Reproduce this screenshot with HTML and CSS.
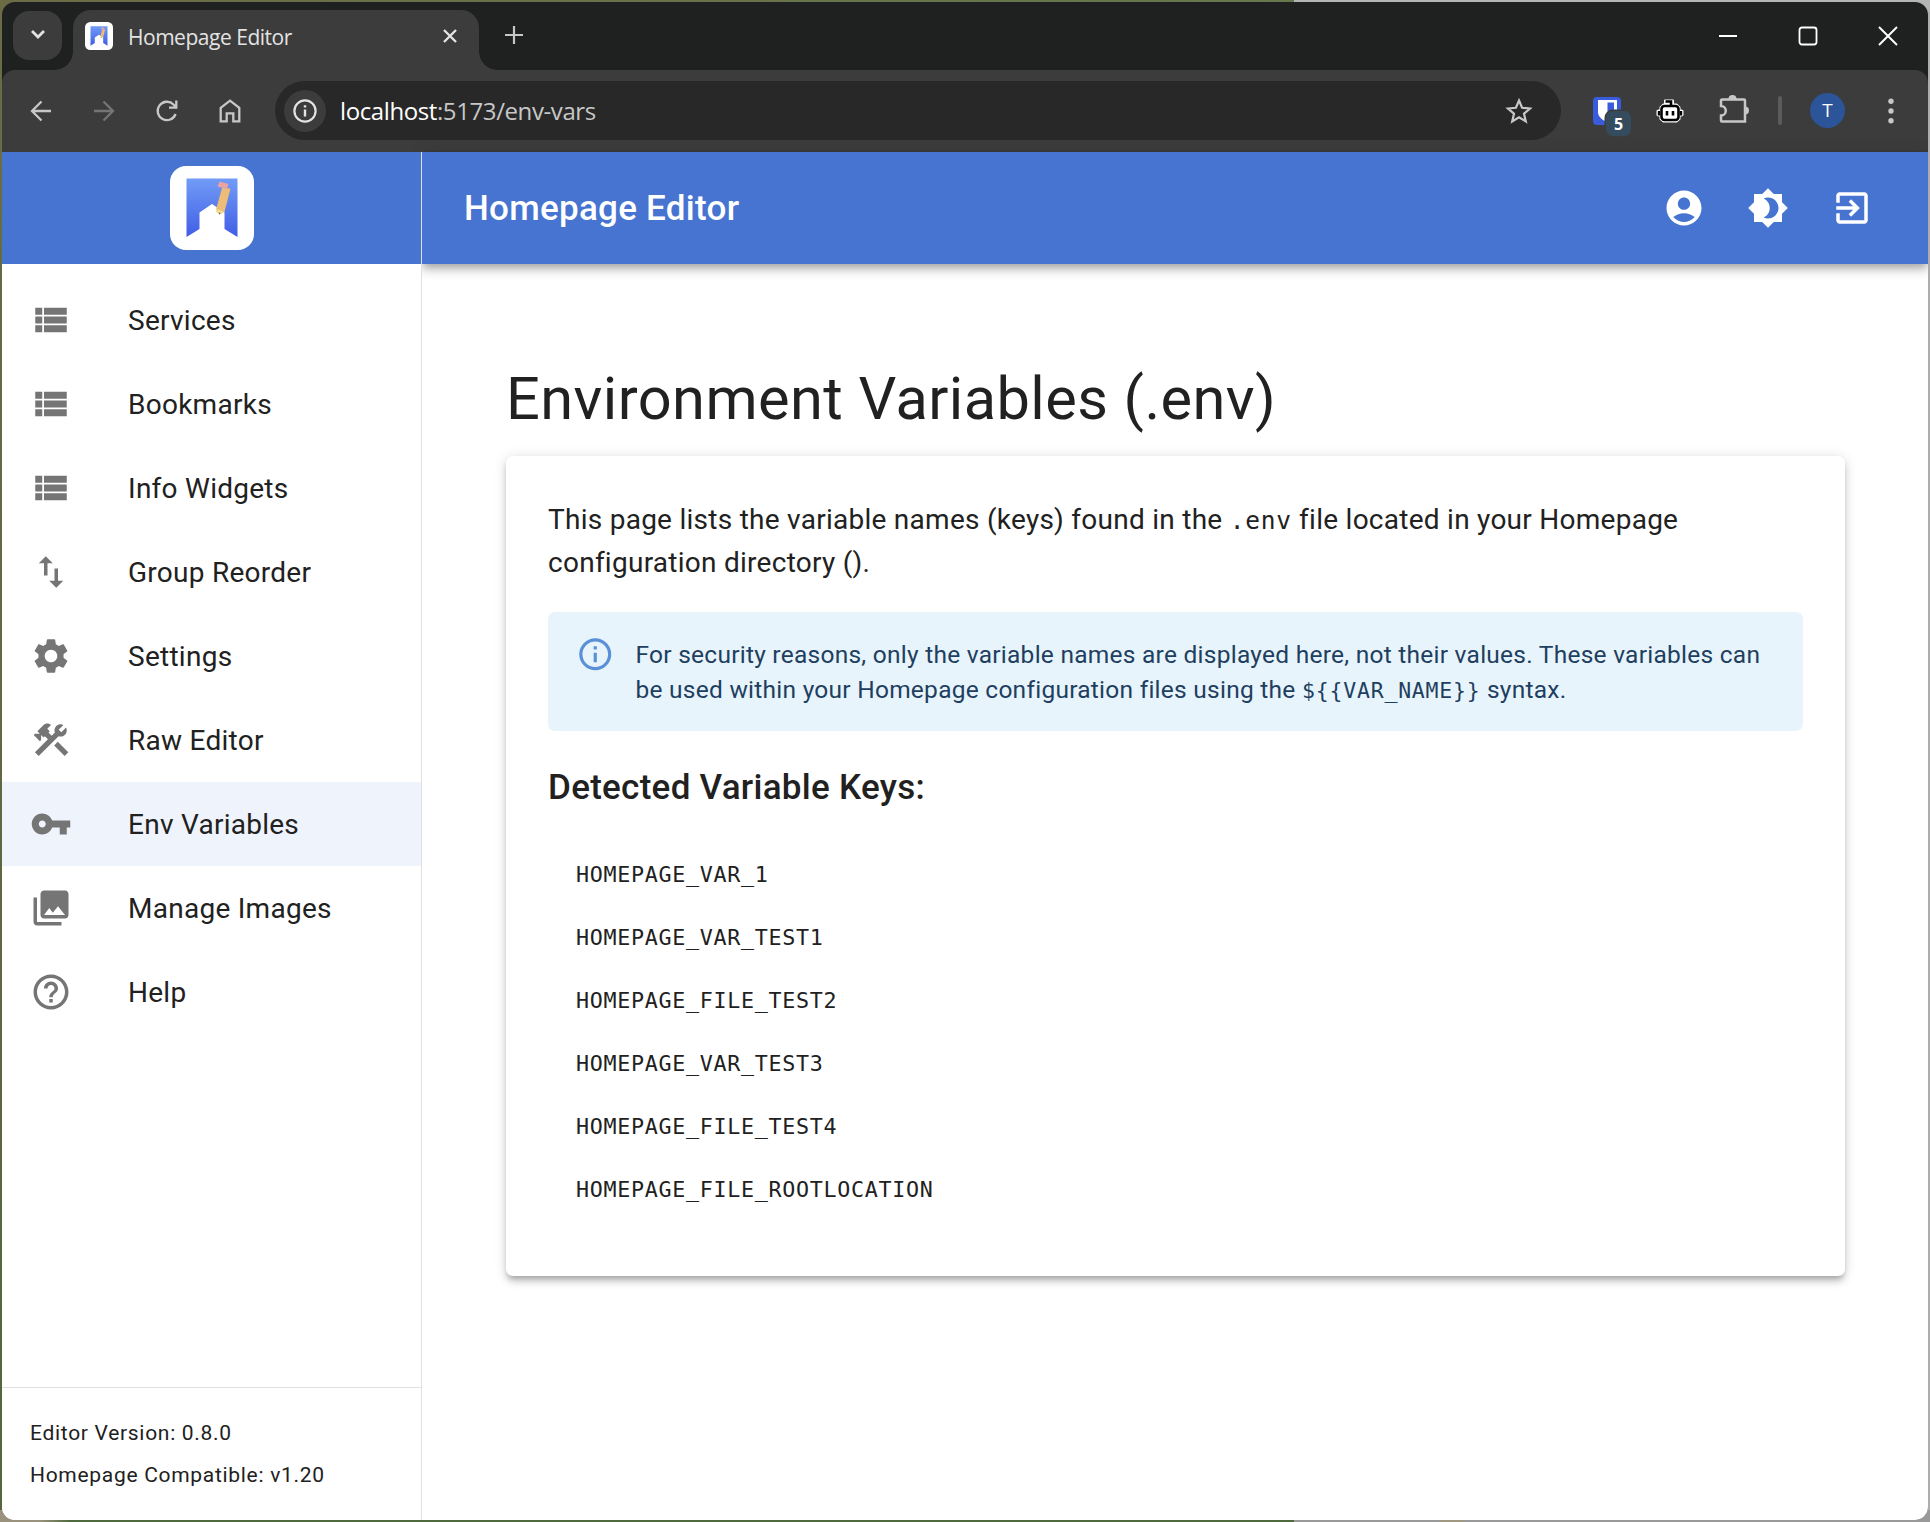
FILE: index.html
```html
<!DOCTYPE html>
<html lang="en">
<head>
<meta charset="utf-8">
<title>Homepage Editor</title>
<link rel="stylesheet" href="styles.css">
</head>
<body>
<svg class="defs" aria-hidden="true">
  <defs>
    <linearGradient id="logo-blue" x1="0" y1="0" x2="0" y2="1"><stop offset="0" stop-color="#719cf6"/><stop offset="1" stop-color="#415de6"/></linearGradient>
    <symbol id="logo" viewBox="0 0 84 84">
      <rect width="84" height="84" rx="16" fill="#fff"/>
      <path d="M16.500 12.500h51V71L54.500 63V46.500L42 38 29.500 46.500V63L16.500 71z" fill="url(#logo-blue)"/>
      <path d="M52 22 60.500 22.500 54.500 46 46 43.500z" fill="#ecbc78"/>
      <path d="M46 43.500 54.500 46 50.500 48.500 46 46z" fill="#f3dc8e"/>
      <path d="M49.500 15.500 58.500 18 57 23 47.500 20.500z" fill="#e9a3a3"/>
      <path d="M48.500 46.500l2 .500-1 1.800z" fill="#555"/>
    </symbol>
    <symbol id="list" viewBox="0 0 24 24"><path d="M3 14h4v-4H3v4zm0 5h4v-4H3v4zM3 9h4V5H3v4zm5 5h13v-4H8v4zm0 5h13v-4H8v4zM8 5v4h13V5H8z"/></symbol>
  </defs>
</svg>
<div class="window">
  <div class="tabstrip">
    <button class="tab-search"><svg width="16" height="12" viewBox="0 0 16 12"><path d="M2 2l6 6 6-6" fill="none" stroke="#e3e3e3" stroke-width="2.800"/></svg></button>
    <div class="tab">
      <svg class="favicon" width="28" height="28"><use href="#logo"/></svg>
      <span class="tab-title">Homepage Editor</span>
      <svg class="tab-close" width="14" height="14" viewBox="0 0 14 14"><path d="M1 1l12 12M13 1L1 13" stroke="#e3e3e3" stroke-width="2.400"/></svg>
    </div>
    <svg class="new-tab" width="18" height="18" viewBox="0 0 18 18"><path d="M9 0v18M0 9h18" stroke="#c7c7c7" stroke-width="2.200"/></svg>
    <div class="window-controls">
      <svg width="20" height="20" viewBox="0 0 20 20"><path d="M1 10h18" stroke="#fff" stroke-width="2"/></svg>
      <svg width="20" height="20" viewBox="0 0 20 20"><rect x="1.500" y="1.500" width="17" height="17" rx="2.500" fill="none" stroke="#fff" stroke-width="1.800"/></svg>
      <svg width="20" height="20" viewBox="0 0 20 20"><path d="M1 1l18 18M19 1L1 19" stroke="#fff" stroke-width="1.900"/></svg>
    </div>
  </div>
  <div class="toolbar">
    <div class="nav-buttons">
      <svg width="24" height="24" viewBox="0 0 24 24"><path d="M22 12H3M12.500 2.500L3 12l9.500 9.500" fill="none" stroke="#c7c7c7" stroke-width="2.300"/></svg>
      <svg width="24" height="24" viewBox="0 0 24 24"><path d="M2 12h19M11.500 2.500L21 12l-9.500 9.500" fill="none" stroke="#757575" stroke-width="2.300"/></svg>
      <svg width="24" height="24" viewBox="0 0 24 24"><path d="M20.600 15A9.200 9.200 0 1 1 18.500 5.500L21 8M21.300 1.500V8.700H14" fill="none" stroke="#c7c7c7" stroke-width="2.300"/></svg>
      <svg width="24" height="26" viewBox="0 0 24 26"><path d="M2.700 9.800L12 2.600l9.300 7.200v13.600h-6v-8H8.700v8h-6z" fill="none" stroke="#c7c7c7" stroke-width="2.300"/></svg>
    </div>
    <div class="omnibox">
      <span class="site-info"><svg width="24" height="24" viewBox="0 0 24 24"><circle cx="12" cy="12" r="10.600" fill="none" stroke="#e3e3e3" stroke-width="2.200"/><path d="M12 10.500v7M12 6.200v2.400" stroke="#e3e3e3" stroke-width="2.400"/></svg></span>
      <span class="url">localhost<span class="url-path">:5173/env-vars</span></span>
      <svg class="star" width="28" height="28" viewBox="0 0 28 28"><path d="M14 3.500l3.100 7.300 7.900.700-6 5.200 1.800 7.700L14 20.300l-6.800 4.100L9 16.700l-6-5.200 7.900-.700z" fill="none" stroke="#c7c7c7" stroke-width="2.200"/></svg>
    </div>
    <div class="extensions">
      <span class="bitwarden"><svg width="28" height="28" viewBox="0 0 28 28"><rect width="28" height="28" rx="4" fill="#3a5bdb"/><path d="M5 3h19v12c0 5-4.500 8-9.500 10.500C9.500 23 5 20 5 15z" fill="#fff"/><path d="M14.500 5.500H21V15c0 3-3 5.500-6.500 7.500z" fill="#3a5bdb"/></svg><span class="badge">5</span></span>
      <svg class="robot" width="28" height="26" viewBox="0 0 28 26"><path d="M9 2.500h8v4h3.500l3 3v2.500l3 1v4l-3 1v3l-3 2.500h-13l-3-2.500v-3l-3-1v-4l3-1V9.500l3-3H9z" fill="#fff" stroke="#fff" stroke-width="2" stroke-linejoin="round"/><path d="M9.500 3.500H15v4" fill="none" stroke="#000" stroke-width="2.600"/><rect x="5.500" y="8" width="17" height="14" rx="3" fill="#fff" stroke="#000" stroke-width="2.600"/><path d="M3 13v4.500M25 13v4.500" stroke="#000" stroke-width="2.400"/><path d="M11 13v4.500M17 13v4.500" stroke="#000" stroke-width="2.600"/></svg>
      <svg class="puzzle" width="30" height="30" viewBox="0 0 30 30"><path d="M3 5.500h22a1 1 0 0 1 1 1v21H3a1 1 0 0 1-1-1V21.500a4.800 4.800 0 0 0 0-9.600V6.500a1 1 0 0 1 1-1z" fill="none" stroke="#c7c7c7" stroke-width="2.500"/><path d="M9.500 5a4 4 0 0 1 8 0zM26 12.500a4 4 0 0 1 0 8z" fill="#c7c7c7"/></svg>
      <span class="separator"></span>
      <span class="avatar">T</span>
      <svg class="kebab" width="6" height="26" viewBox="0 0 6 26" fill="#c7c7c7"><circle cx="3" cy="3.300" r="2.700"/><circle cx="3" cy="13" r="2.700"/><circle cx="3" cy="22.700" r="2.700"/></svg>
    </div>
  </div>
  <div class="app">
    <aside class="sidebar">
      <div class="brand"><svg width="84" height="84"><use href="#logo"/></svg></div>
      <nav class="menu">
        <a class="item"><svg class="icon"><use href="#list"/></svg>Services</a>
        <a class="item"><svg class="icon"><use href="#list"/></svg>Bookmarks</a>
        <a class="item"><svg class="icon"><use href="#list"/></svg>Info Widgets</a>
        <a class="item"><svg class="icon" viewBox="0 0 24 24"><path d="M16 17.010V10h-2v7.010h-3L15 21l4-3.990h-3zM9 3L5 6.990h3V14h2V6.990h3L9 3z"/></svg>Group Reorder</a>
        <a class="item"><svg class="icon" viewBox="0 0 24 24"><path d="M19.140 12.940c.04-.3.06-.61.06-.94 0-.32-.02-.64-.07-.94l2.030-1.580c.18-.14.23-.41.12-.61l-1.920-3.320c-.12-.22-.37-.29-.59-.22l-2.390.96c-.5-.38-1.030-.7-1.620-.94l-.36-2.540c-.04-.24-.24-.41-.48-.41h-3.840c-.24 0-.43.17-.47.41l-.36 2.540c-.59.24-1.130.57-1.620.94l-2.390-.96c-.22-.08-.47 0-.59.22L2.740 8.870c-.12.21-.08.47.12.61l2.030 1.580c-.05.3-.09.63-.09.94s.02.64.07.94l-2.030 1.580c-.18.14-.23.41-.12.61l1.920 3.320c.12.22.37.29.59.22l2.390-.96c.5.38 1.030.7 1.620.94l.36 2.540c.05.24.24.41.48.41h3.840c.24 0 .44-.17.47-.41l.36-2.540c.59-.24 1.130-.56 1.620-.94l2.390.96c.22.08.47 0 .59-.22l1.920-3.320c.12-.22.07-.47-.12-.61l-2.010-1.580zM12 15.600c-1.980 0-3.600-1.620-3.600-3.600s1.620-3.600 3.600-3.600 3.600 1.620 3.600 3.600-1.620 3.600-3.600 3.600z"/></svg>Settings</a>
        <a class="item"><svg class="icon" viewBox="0 0 24 24"><path d="m13.783 15.172 2.121-2.121 5.996 5.996-2.121 2.121z"/><path d="M17.500 10c1.930 0 3.500-1.570 3.500-3.500 0-.58-.16-1.120-.41-1.600l-2.700 2.700-1.490-1.490 2.700-2.700c-.48-.25-1.020-.41-1.600-.41C15.570 3 14 4.570 14 6.500c0 .41.08.8.21 1.160l-1.850 1.850-1.780-1.780.71-.71-1.410-1.410L12 3.490c-1.170-1.170-3.070-1.170-4.240 0L4.220 7.030l1.410 1.410H2.810l-.71.71 3.540 3.540.71-.71V9.150l1.410 1.410.71-.71 1.780 1.780-7.410 7.410 2.120 2.120L16.340 9.790c.36.13.75.21 1.160.21z"/></svg>Raw Editor</a>
        <a class="item selected"><svg class="icon" viewBox="0 0 24 24"><path d="M12.650 10C11.830 7.670 9.610 6 7 6c-3.310 0-6 2.690-6 6s2.690 6 6 6c2.610 0 4.830-1.670 5.650-4H17v4h4v-4h2v-4H12.650zM7 14c-1.100 0-2-.9-2-2s.9-2 2-2 2 .9 2 2-.9 2-2 2z"/></svg>Env Variables</a>
        <a class="item"><svg class="icon" viewBox="0 0 24 24"><path d="M22 16V4c0-1.100-.9-2-2-2H8c-1.100 0-2 .9-2 2v12c0 1.100.9 2 2 2h12c1.100 0 2-.9 2-2zm-11-4l2.030 2.710L16 11l4 5H8l3-4zM2 6v14c0 1.100.9 2 2 2h14v-2H4V6H2z"/></svg>Manage Images</a>
        <a class="item"><svg class="icon" viewBox="0 0 24 24"><path d="M11 18h2v-2h-2v2zm1-16C6.480 2 2 6.480 2 12s4.480 10 10 10 10-4.480 10-10S17.520 2 12 2zm0 18c-4.410 0-8-3.590-8-8s3.590-8 8-8 8 3.590 8 8-3.590 8-8 8zm0-14c-2.210 0-4 1.790-4 4h2c0-1.100.9-2 2-2s2 .9 2 2c0 2-3 1.750-3 5h2c0-2.250 3-2.500 3-5 0-2.210-1.790-4-4-4z"/></svg>Help</a>
      </nav>
      <div class="versions">
        <div>Editor Version: 0.8.0</div>
        <div>Homepage Compatible: v1.20</div>
      </div>
    </aside>
    <div class="content">
      <header class="appbar">
        <div class="app-title">Homepage Editor</div>
        <div class="actions">
          <svg class="icon" viewBox="0 0 24 24"><path d="M12 2C6.480 2 2 6.480 2 12s4.480 10 10 10 10-4.480 10-10S17.520 2 12 2zm0 4c1.930 0 3.500 1.570 3.500 3.500S13.930 13 12 13s-3.500-1.570-3.500-3.500S10.070 6 12 6zm0 14c-2.030 0-4.430-.82-6.140-2.880C7.550 15.800 9.680 15 12 15s4.450.8 6.140 2.120C16.430 19.180 14.030 20 12 20z"/></svg>
          <svg class="icon" viewBox="0 0 24 24"><path d="M20 8.690V4h-4.690L12 .69 8.690 4H4v4.690L.69 12 4 15.310V20h4.690L12 23.310 15.310 20H20v-4.690L23.310 12 20 8.690zM12 18c-.89 0-1.740-.2-2.500-.55C11.560 16.500 13 14.420 13 12s-1.440-4.500-3.500-5.450C10.260 6.200 11.110 6 12 6c3.310 0 6 2.690 6 6s-2.690 6-6 6z"/></svg>
          <svg class="icon" viewBox="0 0 24 24"><path d="M10.090 15.590L11.500 17l5-5-5-5-1.410 1.410L12.670 11H3v2h9.670l-2.580 2.590zM19 3H5c-1.110 0-2 .9-2 2v4h2V5h14v14H5v-4H3v4c0 1.100.89 2 2 2h14c1.100 0 2-.9 2-2V5c0-1.100-.9-2-2-2z"/></svg>
        </div>
      </header>
      <main class="page">
        <h1>Environment Variables (.env)</h1>
        <section class="card">
          <p>This page lists the variable names (keys) found in the <code>.env</code> file located in your Homepage<br>configuration directory ().</p>
          <div class="alert">
            <svg class="alert-icon" viewBox="0 0 24 24"><path d="M11 9h2V7h-2M12 20c-4.410 0-8-3.590-8-8s3.590-8 8-8 8 3.590 8 8-3.590 8-8 8m0-18A10 10 0 0 0 2 12a10 10 0 0 0 10 10 10 10 0 0 0 10-10A10 10 0 0 0 12 2m-1 15h2v-6h-2v6z"/></svg>
            <div class="alert-text">For security reasons, only the variable names are displayed here, not their values. These variables can<br>be used within your Homepage configuration files using the <code>${{VAR_NAME}}</code> syntax.</div>
          </div>
          <h2>Detected Variable Keys:</h2>
          <ul class="keys">
            <li>HOMEPAGE_VAR_1</li>
            <li>HOMEPAGE_VAR_TEST1</li>
            <li>HOMEPAGE_FILE_TEST2</li>
            <li>HOMEPAGE_VAR_TEST3</li>
            <li>HOMEPAGE_FILE_TEST4</li>
            <li>HOMEPAGE_FILE_ROOTLOCATION</li>
          </ul>
        </section>
      </main>
    </div>
  </div>
</div>
</body>
</html>
```
FILE: styles.css
```css
* { box-sizing: border-box; }
body {
  margin: 0;
  width: 1930px;
  height: 1522px;
  padding: 2px;
  overflow: hidden;
  font-family: Roboto, sans-serif;
  color: #212121;
  background:
    linear-gradient(90deg, #9a927c 0 40px, #4f6b3e 70px 1294px, #999 1294px 1440px, #a09880 1440px 1464px, #999 1464px) 0 100% / 100% 12px no-repeat,
    linear-gradient(90deg, #6b6c45, #66784c 1294px, #b4b6b6 1294px) 0 0 / 100% 12px no-repeat,
    linear-gradient(90deg, transparent 50%, #adadad 50%),
    linear-gradient(#6b6c45, #55663c);
}
svg { display: block; flex: none; }
code { font-family: "DejaVu Sans Mono", monospace; }
.defs { position: absolute; width: 0; height: 0; }
.window {
  width: 1926px;
  height: 1518px;
  border-radius: 13px;
  overflow: hidden;
  display: flex;
  flex-direction: column;
  background: #1f2120;
}

/* Browser chrome */
.tabstrip { height: 68px; flex: none; display: flex; padding: 8px 30px 0 11px; }
.tab-search {
  width: 49px; height: 49px; margin-top: 1px; padding: 0; border: 0; border-radius: 16px;
  background: #3c3c3c; display: flex; align-items: center; justify-content: center;
}
.tab-search svg { margin-top: -1px; }
.tab {
  position: relative;
  width: 406px; height: 60px; margin-left: 11px; padding: 0 22px 9px 12px;
  border-radius: 18px 18px 0 0; background: #3c3c3c;
  display: flex; align-items: center;
}
.tab::before, .tab::after {
  content: ""; position: absolute; bottom: 0; width: 18px; height: 18px;
}
.tab::before { left: -18px; background: radial-gradient(circle at 0 0, transparent 17.500px, #3c3c3c 18px); }
.tab::after { right: -18px; background: radial-gradient(circle at 100% 0, transparent 17.500px, #3c3c3c 18px); }
.tab-title { margin: 2px 0 0 15px; font: 21px/28px "Open Sans", sans-serif; letter-spacing: -.48px; color: #e3e3e3; }
.tab-close { margin-left: auto; }
.new-tab { margin: 16px 0 0 26px; }
.window-controls { margin: 16px 0 0 auto; display: flex; gap: 60px; }
.toolbar {
  height: 82px; flex: none; background: #3c3c3c; border-radius: 13px 13px 0 0;
  display: flex; align-items: center; padding: 0 34px 1px 27px;
}
.nav-buttons { display: flex; align-items: center; gap: 38.900px; width: 246px; }
.omnibox {
  width: 1286px; height: 59px; border-radius: 30px; background: #282828;
  display: flex; align-items: center; padding: 0 28px 0 9px;
}
.site-info {
  width: 42px; height: 42px; border-radius: 50%; background: #3c3c3c;
  display: flex; align-items: center; justify-content: center;
}
.url { margin-left: 14px; font: 24px/30px "Open Sans", sans-serif; letter-spacing: -.4px; color: #fff; }
.url-path { color: #c7c7c7; }
.star { margin-left: auto; }
.extensions { flex: 1; display: flex; align-items: center; padding-left: 32px; }
.bitwarden { position: relative; }
.badge {
  position: absolute; left: 13px; top: 14px; width: 25px; height: 25px; border-radius: 7px;
  background: #354b5e; box-shadow: 0 0 0 1.500px #3c3c3c; color: #fff;
  font: 700 16px/27px "Open Sans", sans-serif; text-align: center;
}
.robot { margin-left: 35px; }
.puzzle { margin-left: 35px; margin-top: -4px; }
.separator { width: 4px; height: 29px; border-radius: 2px; background: #5b5b5b; margin-left: 29px; }
.avatar {
  width: 35px; height: 35px; border-radius: 50%; background: #2c5499; margin-left: 28px;
  color: #fff; font: 19px/35px "Open Sans", sans-serif; text-align: center;
}
.kebab { margin-left: auto; }

/* Application */
.app { flex: 1; min-height: 0; display: flex; background: #fff; }
.icon { width: 42px; height: 42px; fill: currentColor; }
.sidebar {
  position: relative; z-index: 1; background: #fff;
  width: 420px; flex: none; border-right: 1px solid #e0e0e0;
  display: flex; flex-direction: column;
}
.brand {
  height: 112px; flex: none; background: #4774d0;
  display: flex; align-items: center; justify-content: center;
}
.menu { padding-top: 14px; }
.item {
  height: 84px; padding-left: 28px; display: flex; align-items: center; gap: 56px;
  font-size: 28px; letter-spacing: .00938em;
}
.item .icon { color: #757575; }
.item.selected { background: #eff4fc; }
.versions {
  margin-top: auto; height: 133px; border-top: 1px solid #e0e0e0; padding: 28px;
  display: flex; flex-direction: column; gap: 7px;
  font-size: 21px; line-height: 35px; letter-spacing: .03333em;
}
.content { flex: 1; min-width: 0; }
.appbar {
  height: 112px; padding: 0 55px 0 42px; background: #4774d0; color: #fff;
  display: flex; align-items: center; justify-content: space-between;
  box-shadow: 0 3.500px 7px -1.750px rgba(0,0,0,.2), 0 7px 8.750px rgba(0,0,0,.14), 0 1.750px 17.500px rgba(0,0,0,.12);
}
.app-title { font-size: 35px; font-weight: 500; letter-spacing: .0075em; }
.actions { display: flex; gap: 42px; }
.page { padding: 98px 83px 0 84px; }
h1 { margin: 0 0 20px; font-size: 59.500px; font-weight: 400; line-height: 74px; letter-spacing: .00735em; }
.card {
  height: 820px; padding: 42px; border-radius: 7px; background: #fff;
  box-shadow: 0 5.250px 5.250px -3.500px rgba(0,0,0,.2), 0 5.250px 7px rgba(0,0,0,.14), 0 1.750px 14px rgba(0,0,0,.12);
}
.card p { margin: 0 0 28px; font-size: 28px; line-height: 43px; letter-spacing: .00938em; }
.card p code { font-size: 24.500px; letter-spacing: .8px; line-height: 1; }
.alert {
  display: flex; padding: 10.500px 28px; border-radius: 7px; background: #e8f4fc; color: #1e3f5f;
}
.alert-icon { width: 38.500px; height: 38.500px; margin: 12.250px 21px 0 0; fill: #5a90d8; }
.alert-text { padding: 14px 0; font-size: 24.500px; line-height: 35px; letter-spacing: .0104em; white-space: nowrap; }
.alert-text code { font-size: 21.500px; letter-spacing: .8px; line-height: 1; }
h2 { margin: 29px 0 13px; font-size: 35px; font-weight: 500; line-height: 56px; letter-spacing: .008em; }
.keys { margin: 0; padding: 14px 28px; list-style: none; }
.keys li { height: 63px; font: 21.700px/63px "DejaVu Sans Mono", monospace; letter-spacing: .69px; }
```
